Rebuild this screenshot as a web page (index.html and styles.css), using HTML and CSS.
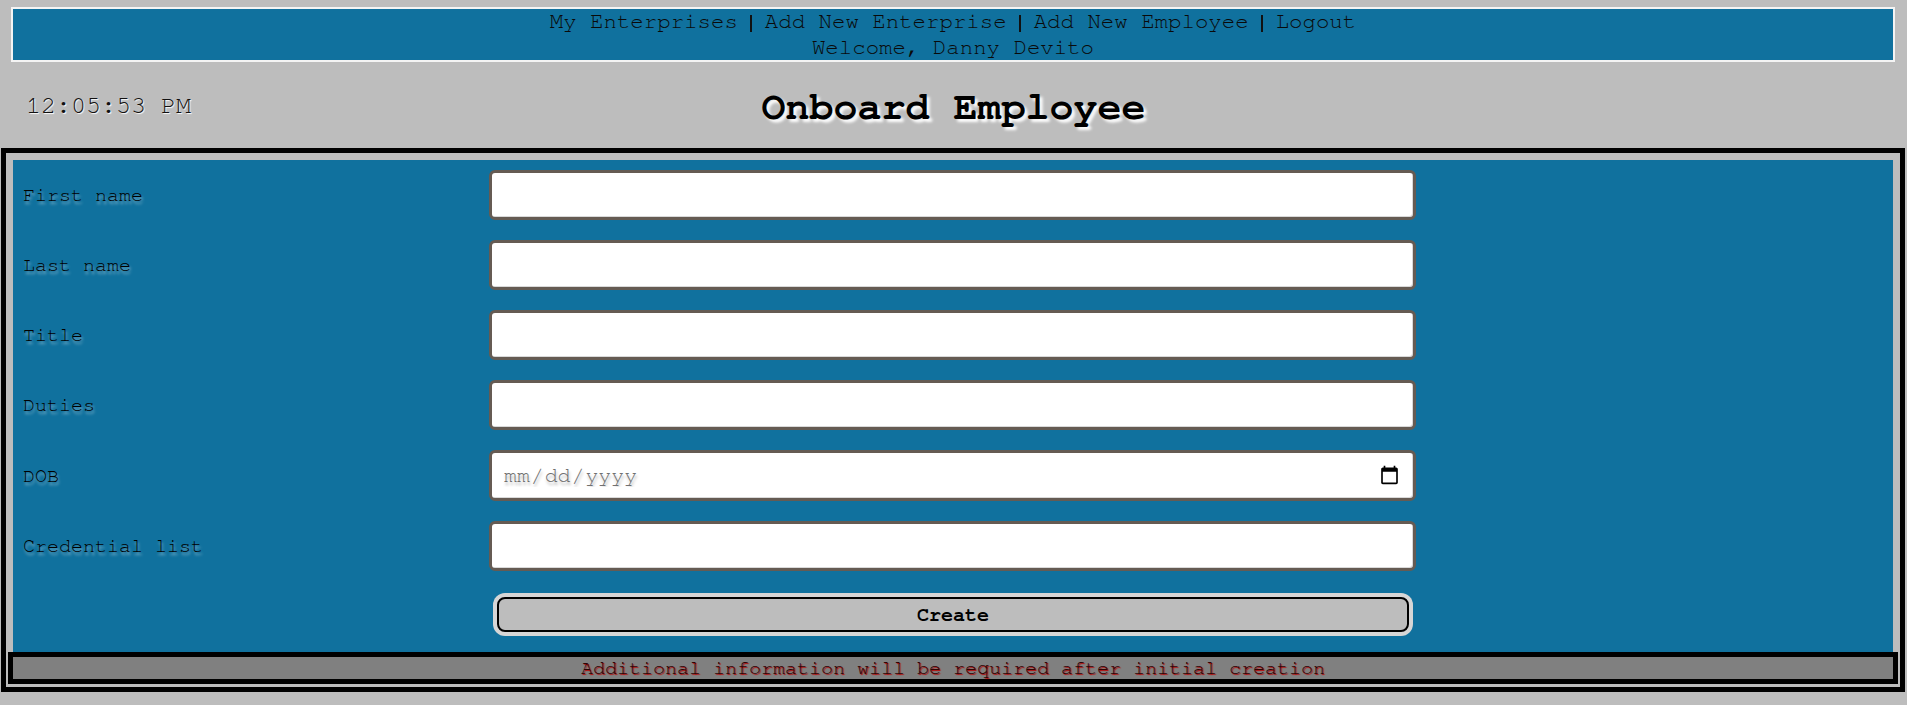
FILE: index.html
```html
<!DOCTYPE html>
<html lang="en">
<head>
<meta charset="utf-8">
<title>Onboard Employee</title>
<link rel="stylesheet" href="styles.css">
</head>
<body>
<nav class="topnav">
  <div class="nav-links"><a href="#">My Enterprises</a><span class="sep"></span><a href="#">Add New Enterprise</a><span class="sep"></span><a href="#">Add New Employee</a><span class="sep"></span><a href="#">Logout</a></div>
  <div class="welcome">Welcome, Danny Devito</div>
</nav>
<header class="page-head">
  <div class="clock">12:05:53 PM</div>
  <h1 class="title">Onboard Employee</h1>
  <div class="spacer"></div>
</header>
<main class="frame">
  <form class="form">
    <label class="lbl" for="fn">First name</label>
    <input class="field" id="fn" type="text">
    <label class="lbl" for="ln">Last name</label>
    <input class="field" id="ln" type="text">
    <label class="lbl" for="ti">Title</label>
    <input class="field" id="ti" type="text">
    <label class="lbl" for="du">Duties</label>
    <input class="field" id="du" type="text">
    <label class="lbl" for="dob">DOB</label>
    <input class="field date" id="dob" type="date">
    <label class="lbl" for="cr">Credential list</label>
    <input class="field" id="cr" type="text">
    <div class="spacer"></div>
    <button class="btn" type="button">Create</button>
  </form>
  <div class="notice">Additional information will be required after initial creation</div>
</main>
</body>
</html>
```

FILE: styles.css
```css
html, body {
  margin: 0;
  padding: 0;
}

body {
  background: #bdbdbd;
  font-family: "Nimbus Mono PS", "Nimbus Mono L", "FreeMono", "Courier 10 Pitch", "Courier", "Liberation Mono", monospace;
  color: #111;
  height: 705px;
  overflow: hidden;
}

.topnav {
  margin: 7px 12px 0 11px;
  background: #10719e;
  border: 2px solid #f4f4f4;
  text-align: center;
  font-size: 22.4px;
  line-height: 25.5px;
}

.nav-links a {
  color: #0a0a0a;
  text-decoration: none;
}

.sep {
  display: inline-block;
  width: 2px;
  height: 17px;
  background: #111;
  margin: 0 12.5px;
  vertical-align: -4px;
}

.welcome {
  color: #0a0a0a;
}

.page-head {
  display: grid;
  grid-template-columns: 1fr auto 1fr;
  align-items: start;
  height: 86px;
}

.clock {
  padding-left: 26px;
  margin-top: 30px;
  font-size: 25px;
  line-height: 28px;
  text-shadow: 1px 1px 1px #fff;
}

.title {
  margin: 23px 0 0;
  font-size: 40px;
  line-height: 45px;
  font-weight: bold;
  color: #000;
  text-shadow: 3px 3px 3px #fff;
}

.frame {
  display: block;
  margin: 0 2px 0 1px;
  border: 5px solid #000;
  padding: 2px 2px 3px;
}

.form {
  margin: 5px 5px 0;
  background: #10719e;
  padding: 10px 10px;
  display: grid;
  grid-template-columns: 466px 927px;
  grid-template-rows: 50px 50px 50px 50px 51px 50px auto;
  row-gap: 20px;
  align-items: center;
}

.lbl {
  font-size: 20px;
  color: #000;
  text-shadow: 1px 3px 3px rgba(255, 255, 255, 0.5);
}

.field {
  box-sizing: border-box;
  height: 50px;
  width: 100%;
  margin: 0;
  border: 3px solid #655b53;
  border-radius: 6px;
  background: #fff;
  box-shadow: inset -1px -1px 0 #d9d9d9;
  font-family: inherit;
  font-size: 21.5px;
  padding: 0 11px;
  color: #111;
}

.date {
  height: 51px;
  color: #707070;
  text-shadow: 1px 3px 3px rgba(0, 0, 0, 0.3);
}

.btn {
  box-sizing: border-box;
  margin: 6px 7px 10px 8px;
  height: 35px;
  border: 2px solid #000;
  border-radius: 8px;
  box-shadow: 0 0 0 4px #d6d6d6;
  background: #bdbdbd;
  font-family: inherit;
  font-weight: bold;
  font-size: 20px;
  color: #000;
  padding: 0;
}

.notice {
  border: 5px solid #000;
  background: #808080;
  text-align: center;
  font-size: 20px;
  line-height: 22px;
  color: #2e0303;
  text-shadow: 1px 1px 1px #b80000;
}
```
